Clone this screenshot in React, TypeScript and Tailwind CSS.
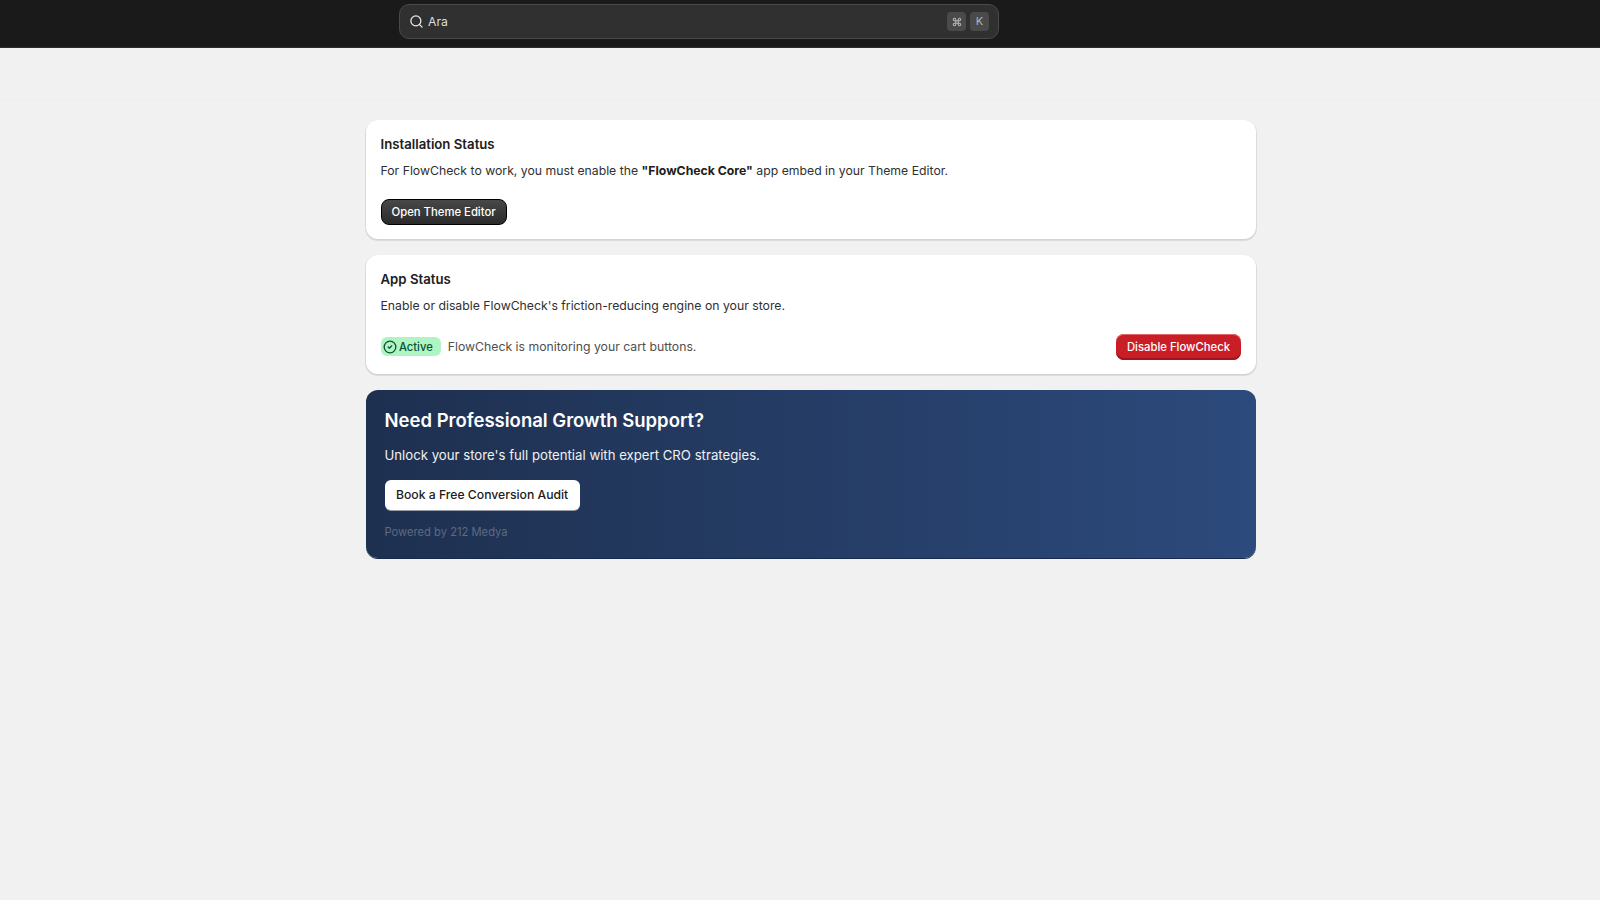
import React from 'react';
import { Search, CircleCheck, Command } from 'lucide-react';

const cardClass =
  'rounded-xl bg-white pl-[14.5px] pr-[15px] pt-[15px] pb-[13px] shadow-[0_1px_0_1px_rgba(0,0,0,0.07),0_1px_2px_rgba(0,0,0,0.08)]';

const App: React.FC = () => {
  return (
    <div className="min-h-[900px] bg-[#f1f1f1] font-['Inter',sans-serif] text-[#202020]">
      {/* Top bar */}
      <header className="flex h-[48px] items-start bg-[#1a1a1a] pl-[399px] pt-[4px] shadow-[inset_0_-1px_0_#2e2e2e]">
        <div className="flex h-[35px] w-[600px] items-center rounded-[10px] border border-[#4a4a4a] bg-[#303030] pl-[9px] pr-[9px]">
          <Search className="h-[15px] w-[15px] text-[#ececec]" strokeWidth={2} />
          <span className="ml-[4px] pt-px text-[12.2px] text-[#dedede]">Ara</span>
          <div className="ml-auto flex items-center gap-[4px]">
            <kbd className="flex h-[19px] w-[19px] items-center justify-center rounded-[4px] bg-[#4a4a4a] text-[#b5b5b5]">
              <Command className="h-[10px] w-[10px]" strokeWidth={2.5} />
            </kbd>
            <kbd className="flex h-[19px] w-[19px] items-center justify-center rounded-[4px] bg-[#4a4a4a] font-['Inter',sans-serif] text-[11px] text-[#b5b5b5]">
              K
            </kbd>
          </div>
        </div>
      </header>

      {/* Empty title band */}
      <div className="h-[52px] border-b border-[#eeeeee]" />

      <main className="ml-[366px] flex w-[890px] flex-col gap-[16px] pt-[20px]">
        <section className={cardClass}>
          <h2 className="text-[13.2px] font-semibold leading-[18px]">Installation Status</h2>
          <p className="mt-[9px] text-[12.25px] leading-[18px] text-[#303030]">
            For FlowCheck to work, you must enable the <strong className="font-bold text-[#202020]">"FlowCheck Core"</strong> app embed
            in your Theme Editor.
          </p>
          <button className="mt-[19px] mb-[1px] flex h-[26px] items-center rounded-lg border border-black bg-gradient-to-b from-[#484848] to-[#2b2b2b] px-[10px] text-[11.3px] font-medium text-white">
            Open Theme Editor
          </button>
        </section>

        <section className={cardClass}>
          <h2 className="text-[13.2px] font-semibold leading-[18px]">App Status</h2>
          <p className="mt-[9px] text-[12.25px] leading-[18px] text-[#303030]">
            Enable or disable FlowCheck's friction-reducing engine on your store.
          </p>
          <div className="mt-[18px] mb-[1px] flex h-[27px] items-center">
            <span className="flex h-[19px] items-center gap-[2px] rounded-md bg-[#aff5c4] pl-[2.5px] pr-[8px] pt-px text-[11.2px] font-medium text-[#0c5132]">
              <CircleCheck className="-mt-px h-[14px] w-[14px]" strokeWidth={2.25} />
              Active
            </span>
            <span className="ml-[7px] pt-[2px] text-[12.25px] text-[#4f4f4f]">FlowCheck is monitoring your cart buttons.</span>
            <button className="ml-auto flex h-[26px] items-center rounded-lg bg-[#c91e26] px-[11px] pt-px text-[11.3px] font-medium text-white shadow-[inset_0_1px_0_#e0686c,inset_0_-2px_0_#a0141c]">
              Disable FlowCheck
            </button>
          </div>
        </section>

        <section className="flex h-[168px] flex-col items-start rounded-xl bg-gradient-to-r from-[#1e3050] to-[#2c4a7c] pl-[18.5px] pr-[18px] pt-[18px] shadow-[0_1px_0_#16294a]">
          <h2 className="text-[18.5px] font-semibold leading-[24px] text-white">Need Professional Growth Support?</h2>
          <p className="mt-[13px] text-[13.2px] leading-[20px] text-[#f1f1f1]">
            Unlock your store's full potential with expert CRO strategies.
          </p>
          <button className="mt-[15px] flex h-[30px] items-center rounded-md bg-white px-[11.5px] text-[12.2px] font-medium text-[#202020] shadow-[0_1px_0_#9aa0ab]">
            Book a Free Conversion Audit
          </button>
          <p className="mt-[14px] text-[11.2px] leading-[16px] text-[#5d6a80]">Powered by 212 Medya</p>
        </section>
      </main>
    </div>
  );
};

export default App;
